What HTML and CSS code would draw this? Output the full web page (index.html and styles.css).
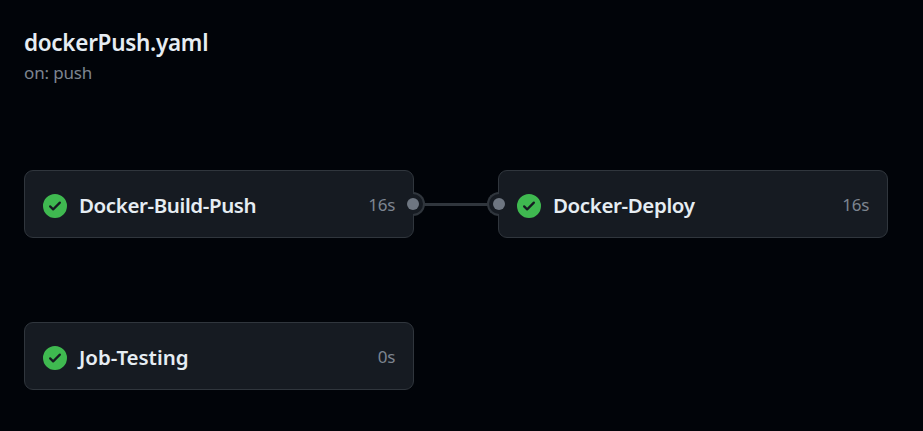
FILE: index.html
```html
<!DOCTYPE html>
<html lang="en">
<head>
<meta charset="utf-8">
<title>dockerPush.yaml</title>
<link rel="stylesheet" href="styles.css">
</head>
<body>
<svg class="defs" aria-hidden="true">
  <symbol id="check" viewBox="0 0 16 16">
    <path fill-rule="evenodd" d="M8 16A8 8 0 1 0 8 0a8 8 0 0 0 0 16Zm3.78-9.72a.751.751 0 0 0-.018-1.042.751.751 0 0 0-1.042-.018L6.75 9.19 5.28 7.72a.751.751 0 0 0-1.042.018.751.751 0 0 0-.018 1.042l2 2a.75.75 0 0 0 1.06 0Z"/>
  </symbol>
</svg>
<header class="header">
  <h1 class="title">dockerPush.yaml</h1>
  <p class="trigger">on: push</p>
</header>
<main class="graph">
  <div class="row">
    <div class="job">
      <svg class="icon"><use href="#check"/></svg>
      <span class="name build">Docker-Build-Push</span>
      <span class="time">16s</span>
      <i class="port port-out"></i>
    </div>
    <div class="link"></div>
    <div class="job">
      <i class="port port-in"></i>
      <svg class="icon"><use href="#check"/></svg>
      <span class="name deploy">Docker-Deploy</span>
      <span class="time">16s</span>
    </div>
  </div>
  <div class="row">
    <div class="job">
      <svg class="icon"><use href="#check"/></svg>
      <span class="name testing">Job-Testing</span>
      <span class="time">0s</span>
    </div>
  </div>
</main>
</body>
</html>
```
FILE: styles.css
```css
* { box-sizing: border-box; }
body {
  margin: 0;
  padding: 28px 24px 0;
  height: 431px;
  overflow: hidden;
  background: #010409;
  color: #e6edf3;
  font-family: "Segoe UI", "Noto Sans", "Open Sans", sans-serif;
}
.defs { position: absolute; width: 0; height: 0; }
.header { height: 142px; }
.title {
  margin: 0;
  font-size: 22.5px;
  line-height: 30px;
  font-weight: 650;
  letter-spacing: -0.3px;
}
.trigger {
  margin: 3px 0 0;
  font-size: 17px;
  line-height: 24px;
  letter-spacing: -0.15px;
  color: #7d8590;
}
.graph { display: flex; flex-direction: column; gap: 84px; }
.row { display: flex; }
.job {
  position: relative;
  display: flex;
  align-items: center;
  width: 390px;
  height: 68px;
  padding: 4px 18px 0;
  border: 1px solid #30363d;
  border-radius: 9px;
  background: #161b22;
}
.icon { width: 24px; height: 24px; margin-right: 12px; fill: #3fb950; }
.name {
  padding-bottom: 2px;
  font-size: 20.5px;
  line-height: 28px;
  font-weight: 620;
  letter-spacing: -0.39px;
}
.testing { letter-spacing: -0.04px; }
.time {
  margin-left: auto;
  padding-bottom: 2px;
  font-size: 17px;
  line-height: 24px;
  letter-spacing: -0.3px;
  color: #7d8590;
}
.link {
  width: 84px;
  height: 3px;
  margin-top: 33px;
  background: #30363d;
}
.port {
  position: absolute;
  top: 21px;
  width: 12px;
  height: 24px;
  border: 2px solid #30363d;
  background: #161b22;
}
.port-out { right: -12px; border-left: 0; border-radius: 0 12px 12px 0; }
.port-in { left: -12px; border-right: 0; border-radius: 12px 0 0 12px; }
.port::after {
  content: "";
  position: absolute;
  top: 4px;
  width: 12px;
  height: 12px;
  border-radius: 50%;
  background: #6e7681;
}
.port-out::after { left: -6px; }
.port-in::after { right: -6px; }
```
